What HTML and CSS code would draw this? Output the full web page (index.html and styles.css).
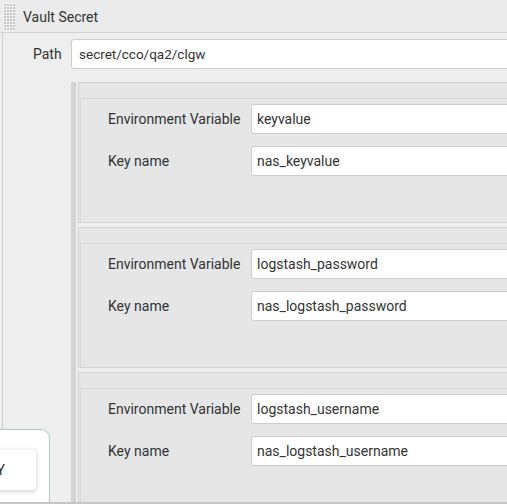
FILE: index.html
```html
<!DOCTYPE html>
<html>
<head>
<meta charset="utf-8">
<link rel="stylesheet" href="styles.css">
</head>
<body>
<div class="page">
  <div class="header">
    <span class="grip"></span>
    <span class="title">Vault Secret</span>
  </div>
  <div class="body">
    <div class="path-row">
      <span class="path-label">Path</span>
      <div class="input">secret/cco/qa2/clgw</div>
    </div>
    <div class="repeat">
      <div class="rail"></div>
      <div class="chunks">
        <div class="chunk">
          <div class="chunk-head"></div>
          <div class="chunk-body">
            <div class="row"><span class="label">Environment Variable</span><div class="input">keyvalue</div></div>
            <div class="row"><span class="label">Key name</span><div class="input">nas_keyvalue</div></div>
          </div>
        </div>
        <div class="chunk">
          <div class="chunk-head"></div>
          <div class="chunk-body">
            <div class="row"><span class="label">Environment Variable</span><div class="input">logstash_password</div></div>
            <div class="row"><span class="label">Key name</span><div class="input">nas_logstash_password</div></div>
          </div>
        </div>
        <div class="chunk">
          <div class="chunk-head"></div>
          <div class="chunk-body">
            <div class="row"><span class="label">Environment Variable</span><div class="input">logstash_username</div></div>
            <div class="row"><span class="label">Key name</span><div class="input">nas_logstash_username</div></div>
          </div>
        </div>
      </div>
    </div>
  </div>
  <div class="popup">
    <div class="popup-card"><span class="popup-text">APPLY</span></div>
  </div>
</div>
</body>
</html>
```

FILE: styles.css
```css
html, body {
  margin: 0;
  padding: 0;
}
body {
  width: 507px;
  height: 504px;
  overflow: hidden;
  background: #eeeeee;
  font-family: Roboto, "Liberation Sans", sans-serif;
  font-size: 14px;
  color: #333;
}
.page {
  position: relative;
  width: 700px;
  height: 502px;
  border-bottom: 2px solid #c6c6c6;
  overflow: hidden;
}
.header {
  height: 32px;
  background: #ebebeb;
  border-bottom: 1px solid #d2d2d2;
  display: flex;
  align-items: center;
}
.grip {
  width: 12px;
  height: 28px;
  margin-left: 3px;
  margin-top: 1px;
  background-color: #c4c4c4;
  background-image:
    linear-gradient(90deg, #f4f4f4 1px, transparent 1px),
    linear-gradient(#f4f4f4 1px, transparent 1px);
  background-size: 3px 3px;
}
.title {
  margin-left: 8px;
  margin-top: 2px;
  font-size: 14px;
}
.body {
  margin-left: 2px;
  border-left: 1px solid #d0d0d0;
  padding-top: 6px;
  height: 463px;
}
.path-row {
  display: flex;
  align-items: center;
  height: 30px;
}
.path-label {
  margin-left: 30px;
  width: 38px;
}
.input {
  flex: 1;
  height: 28px;
  line-height: 28px;
  background: #fff;
  border: 1px solid #cccccc;
  border-radius: 3px;
  padding-left: 7px;
  font-size: 13.5px;
  color: #333;
  white-space: nowrap;
}
.repeat {
  display: flex;
  margin-top: 13px;
  margin-left: 68px;
}
.rail {
  width: 5px;
  background: #d4d4d4;
  margin-right: 2px;
  flex: none;
}
.chunks {
  flex: 1;
  display: flex;
  flex-direction: column;
  gap: 4px;
}
.chunk {
  height: 139px;
  border: 1px solid #d3d3d3;
  background: #e6e6e6;
  display: flex;
  flex-direction: column;
}
.chunk-head {
  height: 15px;
  border-bottom: 1px solid #d6d6d6;
}
.chunk-body {
  flex: 1;
  margin-left: 1px;
  border-left: 1px solid #dadada;
  padding: 5px 0 0 27px;
  display: flex;
  flex-direction: column;
  gap: 12px;
}
.row {
  display: flex;
  align-items: center;
  height: 30px;
}
.label {
  width: 143px;
  flex: none;
}
.row .input {
  padding-left: 5px;
  font-size: 14px;
}
.popup {
  position: absolute;
  left: -20px;
  top: 429px;
  width: 68px;
  height: 90px;
  background: #fff;
  border: 1px solid #aecabe;
  border-radius: 0 9px 0 0;
}
.popup-card {
  position: absolute;
  left: 0;
  top: 20px;
  width: 55px;
  height: 40px;
  background: #fff;
  border-radius: 4px;
  box-shadow: 0 1px 5px rgba(0, 0, 0, 0.22);
  display: flex;
  align-items: center;
  justify-content: flex-end;
  overflow: hidden;
}
.popup-text {
  font-size: 14px;
  color: #333;
  margin-right: 30px;
  letter-spacing: 1px;
}
```
